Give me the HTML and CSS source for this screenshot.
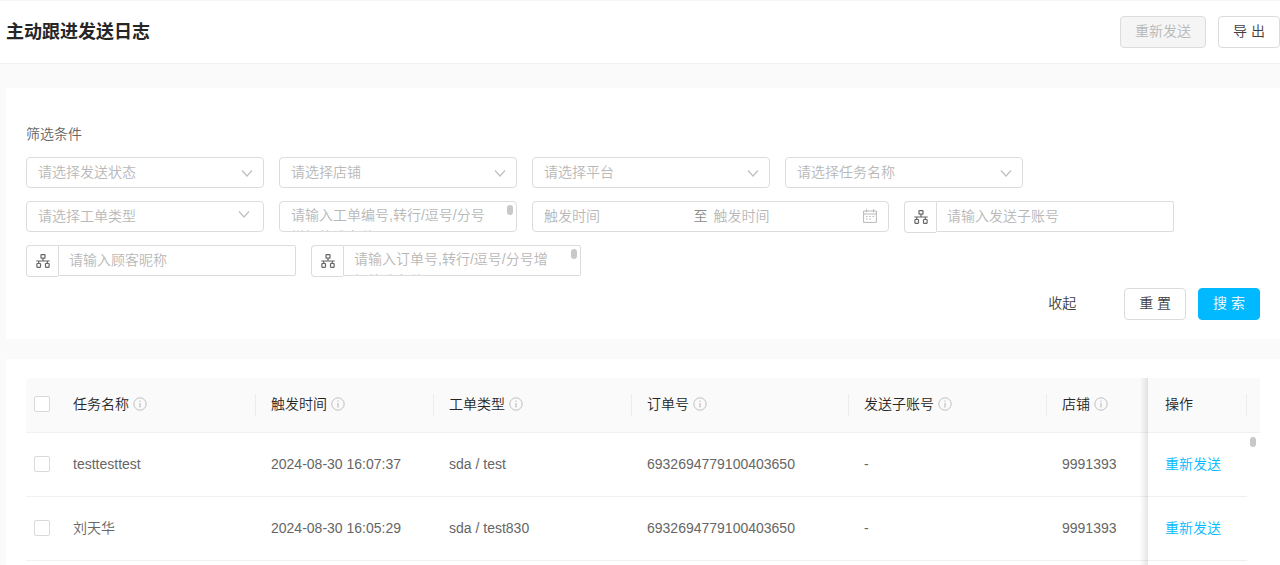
FILE: index.html
```html
<!DOCTYPE html>
<html lang="zh-CN">
<head>
<meta charset="utf-8">
<title>主动跟进发送日志</title>
<link rel="stylesheet" href="styles.css">
</head>
<body>
<svg class="sprite" aria-hidden="true">
  <symbol id="chevron" viewBox="0 0 12 12"><path d="M1 3.500 6 9l5-5.500" fill="none" stroke="currentColor" stroke-width="1.200"/></symbol>
  <symbol id="tree" viewBox="0 0 14 14"><g fill="none" stroke="currentColor" stroke-width="1.200"><rect x="5" y=".6" width="4" height="3.600" rx=".5"/><rect x=".9" y="9.500" width="3.600" height="3.800" rx=".5"/><rect x="9.500" y="9.500" width="3.600" height="3.800" rx=".5"/><path d="M7 4.200V7M.3 7h13.400M2.700 7v2.500M11.300 7v2.500"/></g></symbol>
  <symbol id="info" viewBox="0 0 14 14"><circle cx="7" cy="7" r="6.200" fill="none" stroke="currentColor"/><path d="M7 6v4.500M7 3.500v1.300" fill="none" stroke="currentColor" stroke-width="1.200"/></symbol>
  <symbol id="calendar" viewBox="0 0 14 14"><path d="M.6 2h12.800v11.400H.6zM.6 5h12.800M3.500.2v3M10.500.2v3" fill="none" stroke="currentColor"/><path d="M3 7.500h1.500M6.300 7.500h1.500M9.500 7.500H11M3 10h1.500M6.300 10h1.500" stroke="currentColor"/></symbol>
</svg>
<div class="page">
  <header class="header">
    <h1 class="title">主动跟进发送日志</h1>
    <div class="header-actions">
      <button class="btn" type="button" disabled>重新发送</button>
      <button class="btn" type="button">导 出</button>
    </div>
  </header>
  <main class="main">
    <form class="panel filters">
      <h2 class="filters-title">筛选条件</h2>
      <div class="fields">
        <div class="field"><select class="control" aria-label="发送状态"><option>请选择发送状态</option></select><svg class="arrow"><use href="#chevron"/></svg></div>
        <div class="field"><select class="control" aria-label="店铺"><option>请选择店铺</option></select><svg class="arrow"><use href="#chevron"/></svg></div>
        <div class="field"><select class="control" aria-label="平台"><option>请选择平台</option></select><svg class="arrow"><use href="#chevron"/></svg></div>
        <div class="field"><select class="control" aria-label="任务名称"><option>请选择任务名称</option></select><svg class="arrow"><use href="#chevron"/></svg></div>
        <div class="field"><select class="control" aria-label="工单类型"><option>请选择工单类型</option></select><svg class="arrow arrow-cascader"><use href="#chevron"/></svg></div>
        <div class="field"><textarea class="control" aria-label="工单编号" placeholder="请输入工单编号,转行/逗号/分号增加筛选条件"></textarea><span class="thumb"></span></div>
        <div class="range control">
          <input class="range-input" type="text" aria-label="触发时间开始" placeholder="触发时间">
          <span class="range-sep">至</span>
          <input class="range-input" type="text" aria-label="触发时间结束" placeholder="触发时间">
          <svg class="calendar"><use href="#calendar"/></svg>
        </div>
        <div class="group"><button class="addon" type="button" aria-label="选择子账号"><svg class="icon"><use href="#tree"/></svg></button><div class="field"><input class="control joined" type="text" aria-label="发送子账号" placeholder="请输入发送子账号"></div></div>
        <div class="group"><button class="addon" type="button" aria-label="选择顾客"><svg class="icon"><use href="#tree"/></svg></button><div class="field"><input class="control joined" type="text" aria-label="顾客昵称" placeholder="请输入顾客昵称"></div></div>
        <div class="group"><button class="addon" type="button" aria-label="选择订单"><svg class="icon"><use href="#tree"/></svg></button><div class="field"><textarea class="control joined" aria-label="订单号" placeholder="请输入订单号,转行/逗号/分号增加筛选条件"></textarea><span class="thumb"></span></div></div>
      </div>
      <div class="filter-actions">
        <button class="collapse" type="button">收起</button>
        <button class="btn" type="button">重 置</button>
        <button class="btn primary" type="button">搜 索</button>
      </div>
    </form>
    <section class="panel results">
      <div class="table-wrap">
        <table class="table">
          <colgroup><col class="c-check"><col class="c-wide"><col class="c-time"><col class="c-wide"><col class="c-order"><col class="c-wide"><col><col class="c-action"><col class="c-gutter"></colgroup>
          <thead>
            <tr>
              <th class="check"><input class="box" type="checkbox" aria-label="全选"></th>
              <th class="split"><span class="head">任务名称<svg class="info"><use href="#info"/></svg></span></th>
              <th class="split"><span class="head">触发时间<svg class="info"><use href="#info"/></svg></span></th>
              <th class="split"><span class="head">工单类型<svg class="info"><use href="#info"/></svg></span></th>
              <th class="split"><span class="head">订单号<svg class="info"><use href="#info"/></svg></span></th>
              <th class="split"><span class="head">发送子账号<svg class="info"><use href="#info"/></svg></span></th>
              <th><span class="head">店铺<svg class="info"><use href="#info"/></svg></span></th>
              <th class="split action">操作</th>
              <th class="gutter"></th>
            </tr>
          </thead>
          <tbody>
            <tr>
              <td class="check"><input class="box" type="checkbox" aria-label="testtesttest"></td>
              <td>testtesttest</td><td>2024-08-30 16:07:37</td><td>sda / test</td><td>6932694779100403650</td><td>-</td><td>9991393</td>
              <td class="action"><a class="link" href="#">重新发送</a></td><td class="gutter"><span class="thumb"></span></td>
            </tr>
            <tr>
              <td class="check"><input class="box" type="checkbox" aria-label="刘天华"></td>
              <td>刘天华</td><td>2024-08-30 16:05:29</td><td>sda / test830</td><td>6932694779100403650</td><td>-</td><td>9991393</td>
              <td class="action"><a class="link" href="#">重新发送</a></td><td class="gutter"></td>
            </tr>
          </tbody>
        </table>
      </div>
    </section>
  </main>
</div>
</body>
</html>
```
FILE: styles.css
```css
* { box-sizing: border-box; }
body, button, input, select, textarea {
  font-family: "Liberation Sans", "Noto Sans CJK SC", sans-serif;
  font-size: 14px;
  font-weight: 350;
}
body { margin: 0; color: #666; background: #fafafa; line-height: 22px; }
.sprite { display: none; }
.page { height: 100vh; display: flex; flex-direction: column; overflow: hidden; }
.header {
  display: flex; align-items: center; justify-content: space-between;
  height: 64px; padding-left: 6px; flex: none;
  background: #fff; border-top: 1px solid #f5f5fa; border-bottom: 1px solid #f0f0f0;
}
.title { margin: 0; font-size: 18px; line-height: 28px; font-weight: 700; color: #262626; }
.header-actions { display: flex; gap: 12px; }
.btn {
  height: 32px; padding: 0 14px 2px; color: #404040; background: #fff;
  border: 1px solid #dcdcdc; border-radius: 4px; line-height: 22px;
}
.btn:disabled { color: #b8b8b8; background: #f5f5f5; }
.btn.primary { color: #fff; background: #00b9ff; border-color: #00b9ff; }
.main { flex: 1; min-height: 0; display: flex; flex-direction: column; gap: 20px; padding: 24px 0 0 6px; }
.panel { background: #fff; padding: 19px 20px; }
.filters { padding-top: 35px; flex: none; }
.filters-title { margin: 0 0 12px; font-size: 14px; line-height: 22px; font-weight: 350; }
.fields { display: flex; flex-wrap: wrap; gap: 13px 15px; }
.field { position: relative; width: 238px; height: 31px; }
.control {
  display: block; width: 100%; height: 31px; padding: 0 11px 2px; margin: 0;
  background: #fff; border: 1px solid #dcdcdc; border-radius: 4px; color: #b8b8b8; outline: 0;
}
select.control { appearance: none; }
textarea.control { padding: 2px 28px 0 11px; line-height: 22px; resize: none; overflow: hidden; }
.control.joined { border-radius: 0 2px 2px 0; padding-left: 10px; }
::placeholder { color: #b8b8b8; opacity: 1; }
.arrow { position: absolute; right: 11px; top: 10px; width: 12px; height: 12px; color: #bfbfbf; pointer-events: none; }
.arrow-cascader { right: 14px; top: 7px; }
.thumb { position: absolute; right: 4px; top: 4px; width: 6px; height: 10px; border-radius: 3px; background: #c8c8c8; }
.range { width: 357px; display: flex; align-items: center; }
.range-input { flex: 1; min-width: 0; padding: 0; border: 0; background: none; outline: 0; }
.range-sep { width: 20px; color: #8c8c8c; }
.calendar { width: 14px; height: 14px; }
.group { display: flex; }
.addon {
  display: flex; align-items: center; justify-content: center; width: 32px; height: 32px; padding: 0;
  color: #666; background: #fff; border: 1px solid #dcdcdc; border-right: 0; border-radius: 4px 0 0 4px;
  margin-bottom: -1px;
}
.icon { width: 14px; height: 14px; }
.filter-actions { display: flex; justify-content: flex-end; gap: 12px; margin-top: 12px; }
.collapse { padding: 0 0 4px; margin-right: 36px; border: 0; background: none; color: #404040; }
.results { flex: 1; min-height: 0; padding-bottom: 0; }
.table-wrap { position: relative; height: 100%; }
.table-wrap::after {
  content: ""; position: absolute; top: 0; bottom: 0; right: 112px; width: 8px;
  background: linear-gradient(to right, transparent, rgba(0, 0, 0, .1));
}
.table { width: 100%; table-layout: fixed; border-collapse: separate; border-spacing: 0; }
.c-check { width: 32px; }
.c-wide { width: 198px; }
.c-time { width: 178px; }
.c-order { width: 217px; }
.c-action { width: 99px; }
.c-gutter { width: 13px; }
th, td { padding: 0 0 2px 15px; text-align: left; border-bottom: 1px solid #f0f0f0; position: relative; }
th { height: 55px; background: #fafafa; color: #262626; font-weight: 350; }
th:first-child { border-top-left-radius: 4px; }
td { height: 64px; }
.action { padding-left: 17px; }
.split::after { content: ""; position: absolute; right: 0; top: 16px; width: 1px; height: 22px; background: #ececec; }
.head { display: flex; align-items: center; gap: 4px; }
.info { width: 14px; height: 14px; color: #bfbfbf; }
.check, .gutter { padding: 0 0 2px; }
.check { text-align: center; }
td.gutter { border-bottom: 0; }
.box { appearance: none; display: block; width: 16px; height: 16px; margin: 0 auto; border: 1px solid #d9d9d9; border-radius: 2px; background: #fff; }
.link { color: #00b9ff; text-decoration: none; }
```
